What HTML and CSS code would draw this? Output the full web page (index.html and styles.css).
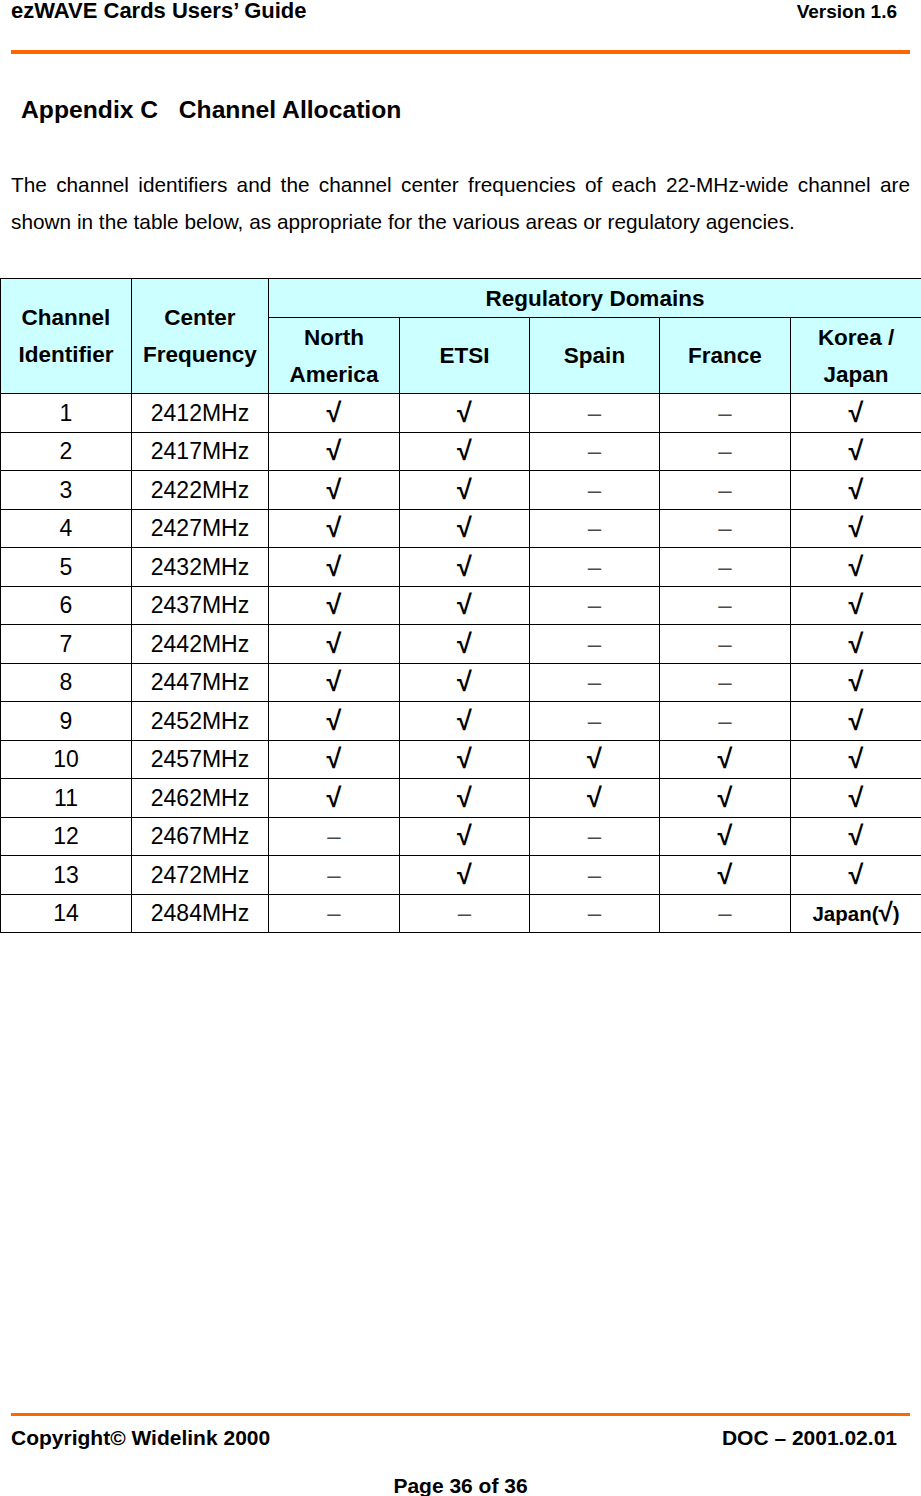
FILE: index.html
```html
<!DOCTYPE html>
<html>
<head>
<meta charset="utf-8">
<link rel="stylesheet" href="styles.css">
</head>
<body>
<div class="page">
  <header class="page-head">
    <div class="head-row">
      <span class="head-title">ezWAVE Cards Users’ Guide</span>
      <span class="head-version">Version 1.6</span>
    </div>
    <div class="rule rule-top"></div>
  </header>

  <main class="content">
    <h1 class="appendix">Appendix C&nbsp;&nbsp;&nbsp;Channel Allocation</h1>
    <p class="intro">The channel identifiers and the channel center frequencies of each 22-MHz-wide channel are shown in the table below, as appropriate for the various areas or regulatory agencies.</p>

    <table class="chan">
      <colgroup>
        <col class="c1"><col class="c2"><col class="c3"><col class="c4"><col class="c5"><col class="c6"><col class="c7">
      </colgroup>
      <thead>
        <tr class="hr1">
          <th rowspan="2">Channel<br>Identifier</th>
          <th rowspan="2">Center<br>Frequency</th>
          <th colspan="5">Regulatory Domains</th>
        </tr>
        <tr class="hr2">
          <th>North<br>America</th>
          <th>ETSI</th>
          <th>Spain</th>
          <th>France</th>
          <th>Korea /<br>Japan</th>
        </tr>
      </thead>
      <tbody>
        <tr><td>1</td><td>2412MHz</td><td class="y">√</td><td class="y">√</td><td class="n">–</td><td class="n">–</td><td class="y">√</td></tr>
        <tr><td>2</td><td>2417MHz</td><td class="y">√</td><td class="y">√</td><td class="n">–</td><td class="n">–</td><td class="y">√</td></tr>
        <tr><td>3</td><td>2422MHz</td><td class="y">√</td><td class="y">√</td><td class="n">–</td><td class="n">–</td><td class="y">√</td></tr>
        <tr><td>4</td><td>2427MHz</td><td class="y">√</td><td class="y">√</td><td class="n">–</td><td class="n">–</td><td class="y">√</td></tr>
        <tr><td>5</td><td>2432MHz</td><td class="y">√</td><td class="y">√</td><td class="n">–</td><td class="n">–</td><td class="y">√</td></tr>
        <tr><td>6</td><td>2437MHz</td><td class="y">√</td><td class="y">√</td><td class="n">–</td><td class="n">–</td><td class="y">√</td></tr>
        <tr><td>7</td><td>2442MHz</td><td class="y">√</td><td class="y">√</td><td class="n">–</td><td class="n">–</td><td class="y">√</td></tr>
        <tr><td>8</td><td>2447MHz</td><td class="y">√</td><td class="y">√</td><td class="n">–</td><td class="n">–</td><td class="y">√</td></tr>
        <tr><td>9</td><td>2452MHz</td><td class="y">√</td><td class="y">√</td><td class="n">–</td><td class="n">–</td><td class="y">√</td></tr>
        <tr><td>10</td><td>2457MHz</td><td class="y">√</td><td class="y">√</td><td class="y">√</td><td class="y">√</td><td class="y">√</td></tr>
        <tr><td>11</td><td>2462MHz</td><td class="y">√</td><td class="y">√</td><td class="y">√</td><td class="y">√</td><td class="y">√</td></tr>
        <tr><td>12</td><td>2467MHz</td><td class="n">–</td><td class="y">√</td><td class="n">–</td><td class="y">√</td><td class="y">√</td></tr>
        <tr><td>13</td><td>2472MHz</td><td class="n">–</td><td class="y">√</td><td class="n">–</td><td class="y">√</td><td class="y">√</td></tr>
        <tr><td>14</td><td>2484MHz</td><td class="n">–</td><td class="n">–</td><td class="n">–</td><td class="n">–</td><td class="jp">Japan(<span class="jp-chk">√</span>)</td></tr>
      </tbody>
    </table>
  </main>

  <footer class="page-foot">
    <div class="rule rule-bottom"></div>
    <div class="foot-row">
      <span class="foot-copy">Copyright© Widelink 2000</span>
      <span class="foot-doc">DOC – 2001.02.01</span>
    </div>
    <div class="foot-page">Page 36 of 36</div>
  </footer>
</div>
</body>
</html>
```

FILE: styles.css
```css
html, body {
  margin: 0;
  padding: 0;
  background: #ffffff;
}

.page {
  width: 921px;
  height: 1496px;
  display: flex;
  flex-direction: column;
  font-family: "Liberation Sans", Arial, sans-serif;
  color: #000;
}

.page-head {
  padding: 0 11px 0 11px;
}

.head-row {
  display: flex;
  justify-content: space-between;
  align-items: baseline;
  height: 22px;
  padding-right: 13px;
  padding-top: 1px;
}

.head-title,
.head-version,
.foot-copy,
.foot-doc,
.foot-page {
  font-weight: bold;
}

.head-title {
  font-size: 22px;
  line-height: 20px;
}

.head-version {
  font-size: 19px;
  line-height: 20px;
}

.rule {
  background: #ff6600;
}

.rule-top {
  height: 4px;
  margin-top: 27px;
}

.content {
  flex: 1;
}

.appendix {
  margin: 38px 0 0 21px;
  font-size: 24.7px;
  line-height: 36px;
  font-weight: bold;
}

.intro {
  margin: 38px 11px 0 11px;
  font-size: 20.8px;
  line-height: 37px;
  text-align: justify;
}

.chan {
  margin-top: 38px;
  border-collapse: collapse;
  table-layout: fixed;
  width: 921px;
}

.c1 { width: 131px; }
.c2 { width: 137px; }
.c3 { width: 131px; }
.c4 { width: 130px; }
.c5 { width: 130px; }
.c6 { width: 131px; }
.c7 { width: 131px; }

.chan th,
.chan td {
  border: 1px solid #000;
  padding: 0;
  text-align: center;
  vertical-align: middle;
}

.chan th {
  background: #ccffff;
  font-size: 22.5px;
  line-height: 37px;
  font-weight: bold;
}

.hr1 th[colspan] {
  height: 38px;
}

.hr2 th {
  height: 75px;
}

.chan td {
  height: 37.5px;
  font-size: 23px;
  line-height: 26px;
}

.chan td.y {
  font-size: 27px;
  font-weight: bold;
}

.chan td.n {
  color: #4a4a4a;
  font-size: 24px;
  line-height: 32px;
}

.chan td.jp {
  font-size: 20.5px;
  font-weight: bold;
}

.jp-chk {
  font-size: 26px;
}

.page-foot {
  padding: 0 11px;
}

.rule-bottom {
  height: 3px;
}

.foot-row {
  display: flex;
  justify-content: space-between;
  align-items: baseline;
  margin-top: 10px;
  padding-right: 13px;
  font-size: 21px;
  line-height: 24px;
}

.foot-page {
  margin-top: 24px;
  text-align: center;
  font-size: 21px;
  line-height: 24px;
  height: 22px;
}
```
